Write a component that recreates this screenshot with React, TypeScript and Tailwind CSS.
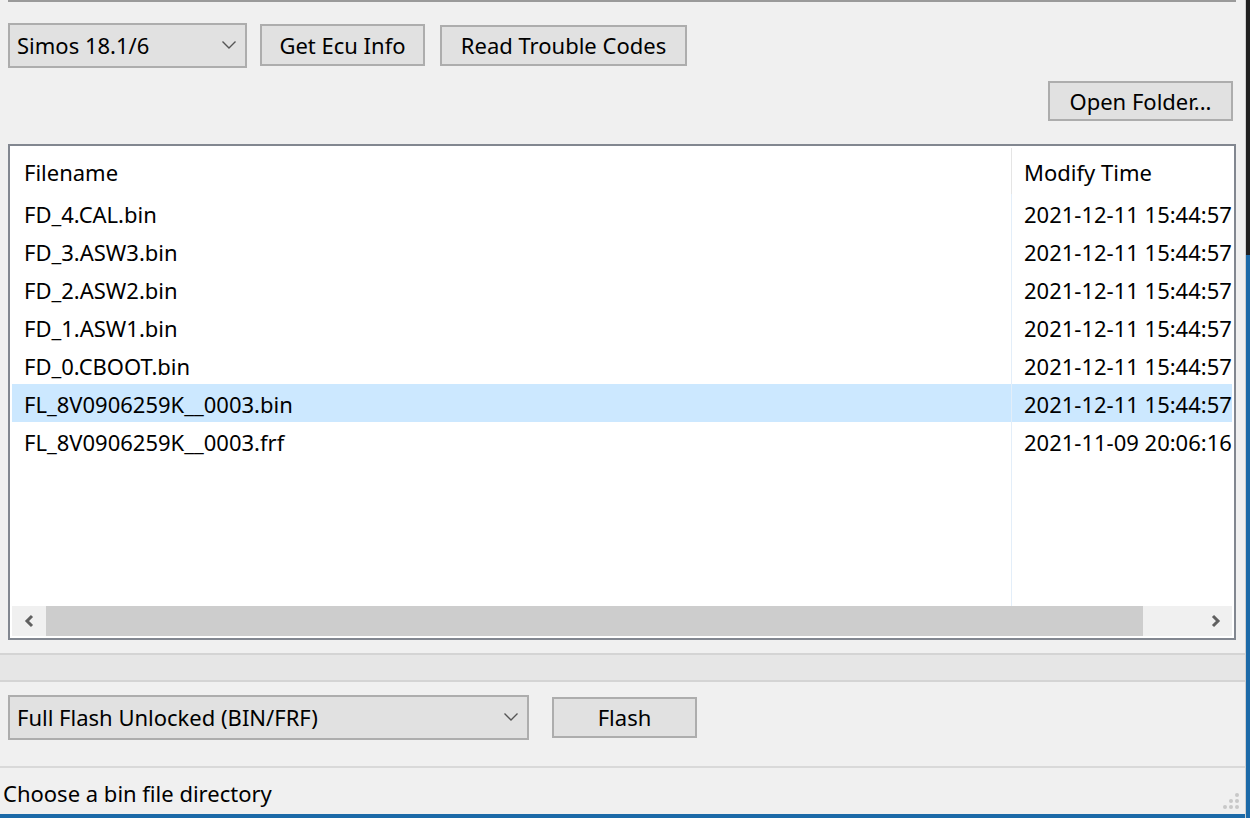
import React from "react";

const font = { fontFamily: '"Noto Sans", "Segoe UI", Arial, sans-serif' };

function Chevron({ className = "" }: { className?: string }) {
  return (
    <svg width="16" height="10" viewBox="0 0 16 10" className={className}>
      <path d="M1.5 1.5 L8 8 L14.5 1.5" fill="none" stroke="#555" strokeWidth="1.4" />
    </svg>
  );
}

const rows = [
  ["FD_4.CAL.bin", "2021-12-11 15:44:57"],
  ["FD_3.ASW3.bin", "2021-12-11 15:44:57"],
  ["FD_2.ASW2.bin", "2021-12-11 15:44:57"],
  ["FD_1.ASW1.bin", "2021-12-11 15:44:57"],
  ["FD_0.CBOOT.bin", "2021-12-11 15:44:57"],
  ["FL_8V0906259K__0003.bin", "2021-12-11 15:44:57"],
  ["FL_8V0906259K__0003.frf", "2021-11-09 20:06:16"],
];

export default function App() {
  return (
    <div
      className="relative w-[1250px] h-[818px] bg-[#f0f0f0] overflow-hidden text-black text-[22px] flex"
      style={font}
    >
      <div className="flex-1 flex flex-col">
        {/* top line */}
        <div className="h-[2px] ml-[8px] w-[1228px] bg-[#9a9a9a]" />

        {/* top controls */}
        <div className="flex items-center mt-[20px] ml-[8px] h-[46px]">
          <div className="w-[239px] h-[45px] border-2 border-[#adadad] bg-[#e1e1e1] flex items-center justify-between pl-[7px] pr-[8px]">
            <span className="leading-none">Simos 18.1/6</span>
            <Chevron />
          </div>
          <div className="ml-[13px] w-[165px] h-[42px] border-2 border-[#adadad] bg-[#e1e1e1] flex items-center justify-center">
            <span className="leading-none">Get Ecu Info</span>
          </div>
          <div className="ml-[15px] w-[247px] h-[41px] border-2 border-[#adadad] bg-[#e1e1e1] flex items-center justify-center">
            <span className="leading-none">Read Trouble Codes</span>
          </div>
        </div>

        {/* open folder */}
        <div className="flex justify-end mt-[13px] pr-[12px]">
          <div className="w-[185px] h-[40px] border-2 border-[#adadad] bg-[#e1e1e1] flex items-center justify-center">
            <span className="leading-none">Open Folder...</span>
          </div>
        </div>

        {/* list */}
        <div className="mt-[23px] ml-[8px] w-[1228px] h-[496px] border-2 border-[#828790] bg-white flex flex-col p-[2px]">
          <div className="flex-1 flex">
            <div className="w-[999px] flex flex-col">
              <div className="h-[46px] flex items-center pl-[12px] pt-[2px]">Filename</div>
              {rows.map((r, i) => (
                <div
                  key={i}
                  className={`h-[38px] flex items-center pl-[12px] pt-[3px] ${i === 5 ? "bg-[#cce8ff]" : ""}`}
                >
                  {r[0]}
                </div>
              ))}
            </div>
            <div className="w-[1px] flex flex-col">
              <div className="h-[46px] bg-[#e5e5e5]" />
              <div className="flex-1 bg-[#e3eef9]" />
            </div>
            <div className="flex-1 flex flex-col">
              <div className="h-[46px] flex items-center pl-[12px] pt-[2px]">Modify Time</div>
              {rows.map((r, i) => (
                <div
                  key={i}
                  className={`h-[38px] flex items-center pl-[12px] pt-[3px] whitespace-nowrap ${i === 5 ? "bg-[#cce8ff]" : ""}`}
                >
                  {r[1]}
                </div>
              ))}
            </div>
          </div>
          {/* horizontal scrollbar */}
          <div className="h-[30px] flex bg-[#f0f0f0]">
            <div className="w-[34px] flex items-center justify-center">
              <svg width="14" height="16" viewBox="0 0 14 16">
                <path d="M10 3 L5 8 L10 13" fill="none" stroke="#606060" strokeWidth="3" />
              </svg>
            </div>
            <div className="w-[1097px] bg-[#cdcdcd]" />
            <div className="flex-1 flex items-center justify-end pr-[9px]">
              <svg width="14" height="16" viewBox="0 0 14 16">
                <path d="M4 3 L9 8 L4 13" fill="none" stroke="#606060" strokeWidth="3" />
              </svg>
            </div>
          </div>
        </div>

        {/* progress bar */}
        <div className="mt-[13px] h-[29px] border-y-2 border-[#d4d4d4] bg-[#e6e6e6]" />

        {/* bottom controls */}
        <div className="flex items-center mt-[12px] ml-[8px] h-[46px]">
          <div className="w-[521px] h-[45px] border-2 border-[#adadad] bg-[#e1e1e1] flex items-center justify-between pl-[7px] pr-[8px]">
            <span className="leading-none">Full Flash Unlocked (BIN/FRF)</span>
            <Chevron />
          </div>
          <div className="ml-[23px] w-[145px] h-[41px] border-2 border-[#adadad] bg-[#e1e1e1] flex items-center justify-center">
            <span className="leading-none">Flash</span>
          </div>
        </div>

        {/* status bar */}
        <div className="mt-[26px] h-[2px] bg-[#d9d9d9]" />
        <div className="flex-1 relative flex items-center pl-[3px]">
          <span className="leading-none pt-[3px]">Choose a bin file directory</span>
          <svg className="absolute right-[5px] bottom-[4px]" width="18" height="18" viewBox="0 0 18 18">
            {[
              [15, 3],
              [15, 9],
              [9, 9],
              [15, 15],
              [9, 15],
              [3, 15],
            ].map(([x, y], i) => (
              <circle key={i} cx={x} cy={y} r="2" fill="#c8c8c8" />
            ))}
          </svg>
        </div>
        <div className="h-[4px] bg-[#1c6aa8]" />
      </div>

      {/* right window edge */}
      <div className="w-[1px] bg-[#cfcfcf]" />
      <div className="w-[4px] flex flex-col">
        <div className="h-[255px] bg-[#202020]" />
        <div className="flex-1 bg-[#1c6aa8]" />
      </div>
    </div>
  );
}
